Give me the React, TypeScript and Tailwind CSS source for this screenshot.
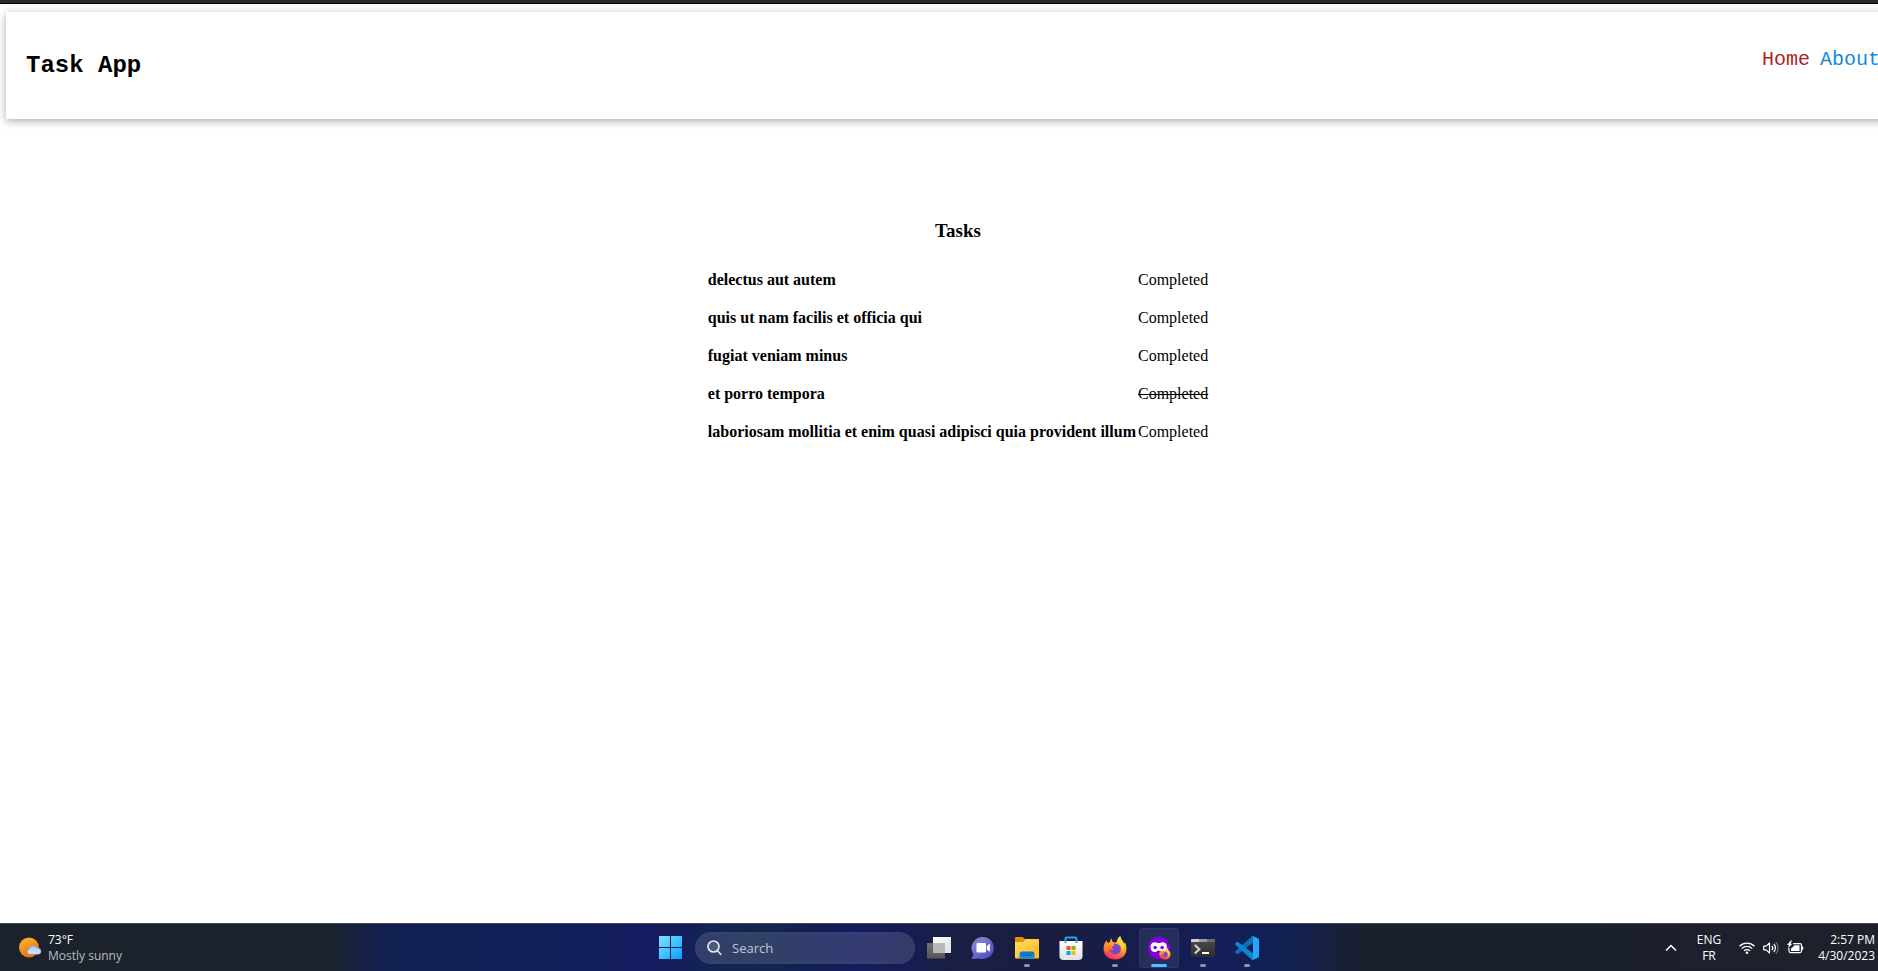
import type { ReactNode } from "react";

type Task = { title: string; completed: boolean };

const tasks: Task[] = [
  { title: "delectus aut autem", completed: false },
  { title: "quis ut nam facilis et officia qui", completed: false },
  { title: "fugiat veniam minus", completed: false },
  { title: "et porro tempora", completed: true },
  { title: "laboriosam mollitia et enim quasi adipisci quia provident illum", completed: false },
];

function Header() {
  return (
    <header className="mt-2 ml-1.5 flex items-start justify-between bg-white py-9 pr-[38px] pl-5 font-['Courier_New','Liberation_Mono',monospace] shadow-[0_2px_8px_rgba(0,0,0,0.34)]">
      <h1 className="text-2xl leading-[35px] font-bold">Task App</h1>
      <nav className="flex gap-2.5 text-xl leading-6">
        <a href="#home" className="text-[#b22222]">Home</a>
        <a href="#about" className="text-[#1688dc]">About</a>
      </nav>
    </header>
  );
}

function TaskList() {
  return (
    <main className="flex flex-1 flex-col items-center pt-[100px] pr-0.5">
      <h2 className="mb-[18px] text-[19px] leading-6 font-bold">Tasks</h2>
      <table className="border-collapse text-base">
        <tbody>
          {tasks.map((task) => (
            <tr key={task.title} className="h-[38px]">
              <th scope="row" className="p-0 pr-0.5 text-left font-bold">{task.title}</th>
              <td className={task.completed ? "p-0 line-through" : "p-0"}>Completed</td>
            </tr>
          ))}
        </tbody>
      </table>
    </main>
  );
}

function WeatherIcon() {
  return (
    <svg width="23" height="22" viewBox="0 0 23 22" aria-hidden="true">
      <defs>
        <linearGradient id="sun" x1="0.2" y1="0" x2="0.7" y2="1">
          <stop offset="0" stopColor="#f6b72f" />
          <stop offset="1" stopColor="#ee6a0c" />
        </linearGradient>
        <linearGradient id="cloud" x1="0" y1="0" x2="0" y2="1">
          <stop offset="0" stopColor="#a9c4f5" />
          <stop offset="1" stopColor="#dbe7fb" />
        </linearGradient>
      </defs>
      <circle cx="10" cy="10.5" r="10" fill="url(#sun)" />
      <path d="M10.500 17.200a2.700 2.700 0 0 1-.3-5.300 4.400 4.400 0 0 1 8.200-.6 3 3 0 0 1 1.200 5.900z" fill="url(#cloud)" stroke="#6f95dc" strokeWidth=".6" />
    </svg>
  );
}

function StartIcon() {
  return (
    <svg width="24" height="24" viewBox="0 0 24 24" aria-hidden="true">
      <defs>
        <linearGradient id="win" x1="0" y1="0" x2="24" y2="24" gradientUnits="userSpaceOnUse">
          <stop offset="0" stopColor="#86dcfb" />
          <stop offset=".5" stopColor="#3ec4fc" />
          <stop offset="1" stopColor="#0795fb" />
        </linearGradient>
      </defs>
      <path d="M0 0h11v11H0zM12 0h11v11H12zM0 12h11v11H0zM12 12h11v11H12z" fill="url(#win)" />
    </svg>
  );
}

function TaskViewIcon() {
  return (
    <svg width="24" height="24" viewBox="0 0 24 24" aria-hidden="true">
      <defs>
        <linearGradient id="tvw" x1="0" y1="0" x2="1" y2="1">
          <stop offset="0" stopColor="#ffffff" />
          <stop offset="1" stopColor="#dedede" />
        </linearGradient>
        <linearGradient id="tvb" x1="0" y1="0" x2="0" y2="1">
          <stop offset="0" stopColor="#737373" />
          <stop offset="1" stopColor="#555555" />
        </linearGradient>
      </defs>
      <path d="M6 1h18v16H6z" fill="url(#tvw)" />
      <path d="M0 7h18v15.500H0z" fill="url(#tvb)" />
      <path d="M6 7h12v10H6z" fill="#b9b9b9" />
    </svg>
  );
}

function ChatIcon() {
  return (
    <svg width="24" height="24" viewBox="0 0 24 24" aria-hidden="true">
      <defs>
        <linearGradient id="chat" x1="0" y1="0" x2=".8" y2="1">
          <stop offset="0" stopColor="#a05d9f" />
          <stop offset=".3" stopColor="#7f7bd6" />
          <stop offset="1" stopColor="#4b50bd" />
        </linearGradient>
      </defs>
      <path d="M12 1a11 11 0 1 1-3.500 21.500L1.500 23c-.7 0-.9-.6-.6-1.100l1.600-3.600A11 11 0 0 1 12 1z" fill="url(#chat)" />
      <rect x="5.500" y="7" width="9.500" height="9.500" rx="1.300" fill="#fff" />
      <path d="M15.800 10.300l2.400-2.200c.3-.2.700-.1.700.3v6.700c0 .4-.4.500-.7.300l-2.400-2z" fill="#fff" />
    </svg>
  );
}

function ExplorerIcon() {
  return (
    <svg width="24" height="24" viewBox="0 0 24 24" aria-hidden="true">
      <defs>
        <linearGradient id="fold" x1="0" y1="0" x2="1" y2="1">
          <stop offset="0" stopColor="#ffdc6b" />
          <stop offset="1" stopColor="#fdba17" />
        </linearGradient>
        <linearGradient id="dock" x1="0" y1="0" x2="0" y2="1">
          <stop offset="0" stopColor="#0b6fc2" />
          <stop offset="1" stopColor="#1b95e0" />
        </linearGradient>
      </defs>
      <path d="M1 1h6.500l2.500 2h13q1 0 1 1v4H0V2q0-1 1-1z" fill="#dd9400" />
      <path d="M0 6h8l3-3h12q1 0 1 1v17.500q0 1-1 1H1q-1 0-1-1z" fill="url(#fold)" />
      <path d="M4.500 22.500V18q0-2.500 2.500-2.500h10q2.500 0 2.500 2.500v4.500z" fill="url(#dock)" />
      <path d="M7.500 18.700h9v1.200h-9z" fill="#075aa8" />
    </svg>
  );
}

function StoreIcon() {
  return (
    <svg width="24" height="24" viewBox="0 0 24 24" aria-hidden="true">
      <defs>
        <linearGradient id="bag" x1="0" y1="0" x2="0" y2="1">
          <stop offset="0" stopColor="#ffffff" />
          <stop offset="1" stopColor="#dfe2e8" />
        </linearGradient>
      </defs>
      <path d="M.5 5h23v15q0 4-4 4h-15q-4 0-4-4z" fill="url(#bag)" />
      <path d="M6.500 7V2.500q0-1 1-1h9q1 0 1 1V7" fill="none" stroke="#20a7ea" strokeWidth="1.900" />
      <path d="M7.500 10h4v4h-4z" fill="#f25022" />
      <path d="M12.500 10h4v4h-4z" fill="#7fba00" />
      <path d="M7.500 15h4v4h-4z" fill="#00a4ef" />
      <path d="M12.500 15h4v4h-4z" fill="#ffb900" />
    </svg>
  );
}

function FoxShape() {
  return (
    <>
      <path d="M12 23.500C5.400 23.500.6 19 .6 13c0-3.600 1.300-6.600 3-8.800.1 1.200.5 2.200 1.100 2.900.7-.5 1.500-.7 2.200-.8C7.100 4.400 7.600 3.200 8.500 2c0 1.900.7 3.600 2.200 4.500 2 .1 2.800-.3 3.200-1.500C14.300 2.800 15.500 1 17.200 0c.1 2 1 3.300 2.400 4.900 1 .8 1.300 1.800 1.400 2.700.7-.2 1-.7 1.200-1.200 1 2.100 1.300 4.500 1.200 6.800-.2 6-4.800 10.300-11.400 10.300z" fill="url(#fox)" />
      <path d="M10.500 8c4.200-1 7.300 1.700 7.300 5.200 0 3-2.300 5.200-5.500 5.200-3 0-5.400-2-5.600-4.900 1.300.7 2.800.6 4.100-.4-1.500-.5-2.200-1.500-2-2.500.9-.4 1.700-.4 2.300-.6.300-.6-.1-1.400-.6-2z" fill="#7a45c9" />
      <path d="M14.500 6.500c4 2 5.300 6 3.500 10 1.500-.7 2.300-1.800 2.600-3C21 8.500 19.500 4.500 17.200 0c-1.500 1.500-2.700 4-2.700 6.500z" fill="#ffdb3a" opacity=".7" />
      <path d="M3.600 4.200C1.200 7 .2 11 1 14.500l3.500 1.500c0-3 .8-5 3-6.500-1.500-.3-2.900-2.500-3.900-5.300z" fill="#ff9c28" opacity=".6" />
    </>
  );
}

function FirefoxIcon() {
  return (
    <svg width="24" height="24" viewBox="0 0 24 24" aria-hidden="true">
      <defs>
        <linearGradient id="fox" x1=".8" y1=".05" x2=".3" y2="1">
          <stop offset="0" stopColor="#ffea3d" />
          <stop offset=".4" stopColor="#ffa12b" />
          <stop offset=".75" stopColor="#ff5545" />
          <stop offset="1" stopColor="#f0286c" />
        </linearGradient>
      </defs>
      <FoxShape />
    </svg>
  );
}

function PrivateIcon() {
  return (
    <svg width="24" height="24" viewBox="0 0 24 24" aria-hidden="true">
      <circle cx="12" cy="12" r="11.200" fill="#8000d7" />
      <path
        fillRule="evenodd"
        d="M3.500 11c0-3.200 1.800-4.700 4.300-4.700 1.800 0 2.700 1 3.900 1s2.100-1 3.900-1c2.500 0 4.300 1.500 4.300 4.700 0 3.100-1.700 5.100-4.200 5.100-1.900 0-2.700-1.700-4-1.700s-2.100 1.700-4 1.700c-2.500 0-4.200-2-4.200-5.100zm2.800.4c.3 1.200 1 1.800 1.900 1.800s1.700-.6 1.900-1.700c-.4-1-1.100-1.500-2-1.500-.8 0-1.500.500-1.800 1.400zm6.900.1c.2 1.100 1 1.700 1.900 1.700s1.600-.6 1.900-1.800c-.3-.9-1-1.400-1.800-1.400-.9 0-1.600.500-2 1.500z"
        fill="#fff"
      />
      <g transform="translate(12 12) scale(.49)">
        <FoxShape />
      </g>
    </svg>
  );
}

function TerminalIcon() {
  return (
    <svg width="24" height="24" viewBox="0 0 24 24" aria-hidden="true">
      <defs>
        <linearGradient id="term" x1="0" y1="0" x2="0" y2="1">
          <stop offset="0" stopColor="#4c4c4c" />
          <stop offset="1" stopColor="#2d2d2d" />
        </linearGradient>
      </defs>
      <rect x="0" y="3" width="24" height="18" rx="1" fill="url(#term)" />
      <path d="M1 3h7v3H0V4q0-1 1-1z" fill="#d0d0d0" />
      <path d="M8 3h8v3H8z" fill="#9b9b9b" />
      <path d="M16 3h7q1 0 1 1v2h-8z" fill="#6c6c6c" />
      <path d="M3.800 9l4.500 4.300-4.500 4.200" fill="none" stroke="#d0d0d0" strokeWidth="2.200" />
      <path d="M11 16h7v2h-7z" fill="#fff" />
    </svg>
  );
}

function CodeIcon() {
  return (
    <svg width="24" height="24" viewBox="0 0 24 24" aria-hidden="true">
      <path d="M23.200 3.600L18.300.2a1.500 1.500 0 0 0-1.700.3L.4 15.300a1 1 0 0 0 0 1.500l1.400 1.200a1 1 0 0 0 1.300.1L22.500 3.300z" fill="#0a70b8" />
      <path d="M23.200 20.400l-4.900 3.400a1.500 1.500 0 0 1-1.700-.3L.4 8.700a1 1 0 0 1 0-1.500L1.800 6a1 1 0 0 1 1.300-.1l19.400 14.800z" fill="#0e86d1" />
      <path d="M18.300 23.800a1.500 1.500 0 0 1-1.700-.3c.5.500 1.400.2 1.400-.6V1.100c0-.8-.9-1.100-1.400-.6a1.500 1.500 0 0 1 1.700-.3l4.900 2.300q.8.400.8 1.300v16.400q0 .9-.8 1.300z" fill="#27a5f5" />
    </svg>
  );
}

type AppEntry = { name: string; icon: ReactNode; state: "idle" | "running" | "active" };

const apps: AppEntry[] = [
  { name: "Task view", icon: <TaskViewIcon />, state: "idle" },
  { name: "Chat", icon: <ChatIcon />, state: "idle" },
  { name: "File Explorer", icon: <ExplorerIcon />, state: "running" },
  { name: "Microsoft Store", icon: <StoreIcon />, state: "idle" },
  { name: "Firefox", icon: <FirefoxIcon />, state: "running" },
  { name: "Firefox private browsing", icon: <PrivateIcon />, state: "active" },
  { name: "Terminal", icon: <TerminalIcon />, state: "running" },
  { name: "Visual Studio Code", icon: <CodeIcon />, state: "running" },
];

function AppButton({ app }: { app: AppEntry }) {
  return (
    <button
      type="button"
      aria-label={app.name}
      className={
        app.state === "active"
          ? "relative flex size-10 items-center justify-center rounded bg-white/7 ring-1 ring-white/4 ring-inset"
          : "relative flex size-10 items-center justify-center rounded"
      }
    >
      {app.icon}
      {app.state === "running" && <span className="absolute bottom-px h-[3px] w-1.5 rounded-full bg-[#9095a8]" />}
      {app.state === "active" && <span className="absolute bottom-px h-[3px] w-4 rounded-full bg-[#4cc2ff]" />}
    </button>
  );
}

function SystemTray() {
  return (
    <div className="flex items-center justify-end pr-[43px] text-center">
      <button type="button" aria-label="Show hidden icons" className="mr-5">
        <svg width="12" height="8" viewBox="0 0 12 8" fill="none" stroke="#fff" strokeWidth="1.500" aria-hidden="true">
          <path d="M1 6.500l5-5 5 5" />
        </svg>
      </button>
      <button type="button" className="mr-[18px]">
        <span className="block">ENG</span>
        <span className="block">FR</span>
      </button>
      <button type="button" aria-label="Network, volume and battery" className="mr-3.5 flex items-center gap-2">
        <svg width="16" height="16" viewBox="0 0 16 16" fill="none" stroke="#fff" strokeWidth="1.300" aria-hidden="true">
          <path d="M.6 6.200a10.500 10.500 0 0 1 14.800 0M2.800 8.600a7.400 7.400 0 0 1 10.400 0M5 10.900a4.300 4.300 0 0 1 6 0" />
          <circle cx="8" cy="12.700" r="1.300" fill="#fff" stroke="none" />
        </svg>
        <svg width="16" height="16" viewBox="0 0 16 16" fill="none" stroke="#fff" strokeWidth="1.200" aria-hidden="true">
          <path d="M.7 6.200v3.600h2.500l3.300 3.300V2.900L3.200 6.200z" strokeLinejoin="round" />
          <path d="M8.800 5.800a3.200 3.200 0 0 1 0 4.400M10.800 3.900a6 6 0 0 1 0 8.200" />
          <path d="M12.800 2.200a8.500 8.500 0 0 1 0 11.600" stroke="#6b7078" />
        </svg>
        <svg width="17" height="16" viewBox="0 0 17 16" fill="none" stroke="#fff" strokeWidth="1.200" aria-hidden="true">
          <path d="M6 3.600h7q1.500 0 1.500 1.500v6q0 1.500-1.500 1.500H3.500Q2 12.600 2 11.100V8" />
          <path d="M7 5.200h5.500v5.900H4V8.500L7 6z" fill="#fff" stroke="none" />
          <path d="M14.800 6.500h1.400v3.200h-1.400z" fill="#fff" stroke="none" />
          <path d="M3.800.5L0 5h2L.8 8.500 5.300 3.800H3.500L5 .5z" fill="#fff" stroke="none" />
        </svg>
      </button>
      <button type="button" className="text-right">
        <span className="block">2:57 PM</span>
        <span className="block">4/30/2023</span>
      </button>
    </div>
  );
}

function Taskbar() {
  return (
    <footer className="grid h-12 grid-cols-[1fr_auto_1fr] items-center border-t border-[#454955] bg-[linear-gradient(90deg,#1c222c_0%,#1c222c_17%,#132152_20%,#10205a_29%,#151c60_34%,#12264d_39%,#141c5e_45%,#1a1e42_50%,#191d42_56%,#141e58_63%,#112053_67%,#1b202f_71%,#1c212b_100%)] font-['Open_Sans','Noto_Sans',sans-serif] text-xs leading-4 text-white">
      <button type="button" className="flex items-center gap-1.5 justify-self-start pl-[19px] text-left">
        <WeatherIcon />
        <span>
          <span className="block">73°F</span>
          <span className="block text-[#b9bcc1]">Mostly sunny</span>
        </span>
      </button>
      <div className="flex items-center gap-1">
        <button type="button" aria-label="Start" className="flex size-10 items-center justify-center">
          <StartIcon />
        </button>
        <label className="flex h-8 w-[220px] items-center gap-2.5 rounded-full bg-white/13 pl-3 ring-1 ring-white/3 ring-inset">
          <svg width="15" height="16" viewBox="0 0 15 16" fill="none" stroke="#e4e6ee" strokeWidth="1.700" strokeLinecap="round" aria-hidden="true">
            <circle cx="6.500" cy="6.500" r="5.500" fill="#ffffff22" />
            <path d="M10.500 10.800l3.200 3.500" />
          </svg>
          <input type="text" aria-label="Search" placeholder="Search" className="w-40 bg-transparent text-[13px] outline-none placeholder:text-[#c3c7d3]" />
        </label>
        {apps.map((app) => (
          <AppButton key={app.name} app={app} />
        ))}
      </div>
      <SystemTray />
    </footer>
  );
}

export default function App() {
  return (
    <div className="overflow-x-hidden bg-white font-['Times_New_Roman','Liberation_Serif',serif] text-black">
      <div className="flex min-h-screen w-[calc(100%+40px)] flex-col">
        <div className="h-1 border-b border-black bg-[#2b2a33]" />
        <Header />
        <TaskList />
        <Taskbar />
      </div>
    </div>
  );
}
